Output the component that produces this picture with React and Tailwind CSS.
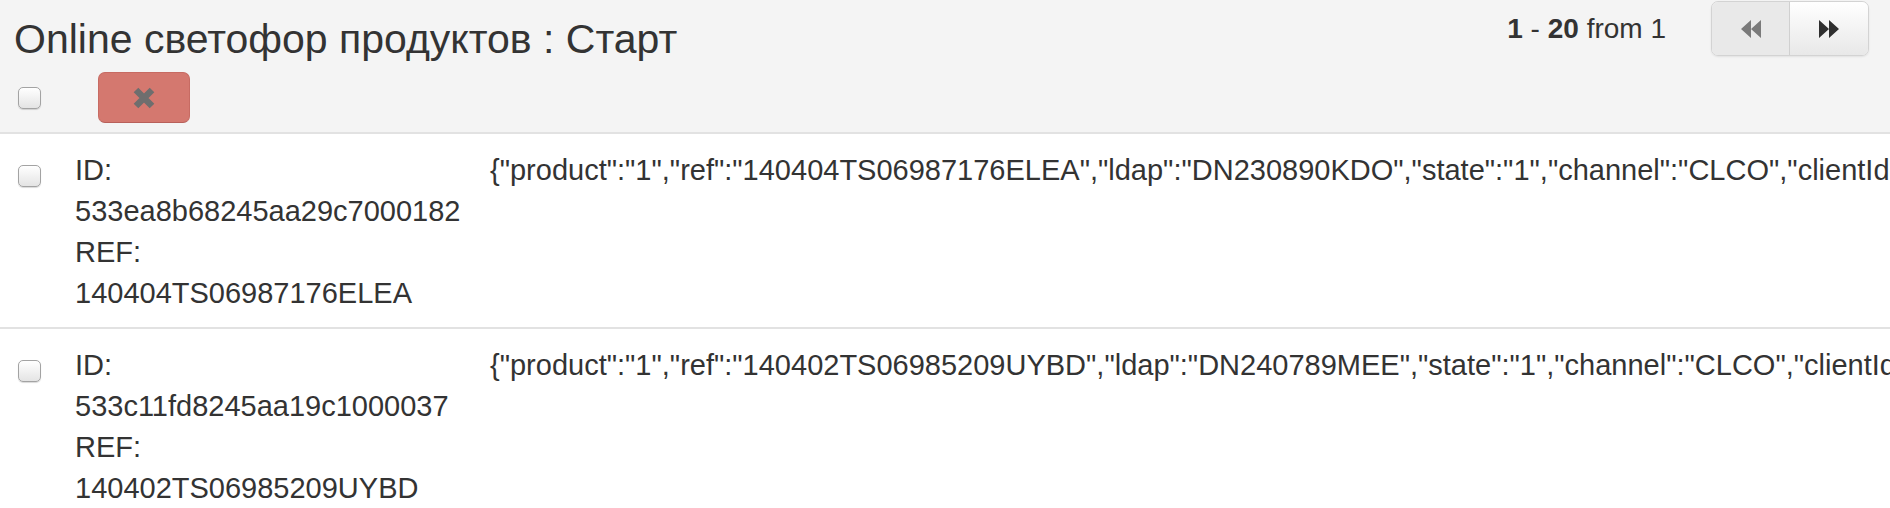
import React from "react";

const rows = [
  {
    id: "533ea8b68245aa29c7000182",
    ref: "140404TS06987176ELEA",
    json: '{"product":"1","ref":"140404TS06987176ELEA","ldap":"DN230890KDO","state":"1","channel":"CLCO","clientId":"","created":"2014-04-04"}',
  },
  {
    id: "533c11fd8245aa19c1000037",
    ref: "140402TS06985209UYBD",
    json: '{"product":"1","ref":"140402TS06985209UYBD","ldap":"DN240789MEE","state":"1","channel":"CLCO","clientId":"","created":"2014-04-02"}',
  },
];

const Check = () => (
  <input
    type="checkbox"
    className="block appearance-none w-[23px] h-[22px] rounded-[5px] border border-[#a3a3a3] bg-gradient-to-b from-white to-[#e4e4e4] shadow-[0_1px_1px_rgba(0,0,0,0.15)] shrink-0"
  />
);

const Backward = ({ color }) => (
  <svg width="26" height="20" viewBox="0 0 26 20">
    <path d="M13 1 L3 10 L13 19 Z M23 1 L13 10 L23 19 Z" fill={color} />
  </svg>
);

const Forward = ({ color }) => (
  <svg width="26" height="20" viewBox="0 0 26 20">
    <path d="M3 1 L13 10 L3 19 Z M13 1 L23 10 L13 19 Z" fill={color} />
  </svg>
);

const App = () => {
  return (
    <div
      className="w-[1890px] h-[508px] overflow-hidden bg-white text-[#333]"
      style={{ fontFamily: '"Liberation Sans", Arial, sans-serif' }}
    >
      <div className="bg-[#f4f4f4] border-b-2 border-[#e2e2e2] h-[134px] flex justify-between">
        <div className="pl-[14px] pt-[16px]">
          <h3 className="text-[41px] leading-[46px] text-[#333] font-normal whitespace-nowrap">
            Online светофор продуктов : Старт
          </h3>
          <div className="flex items-center mt-[10px]">
            <div className="pl-[4px] flex">
              <Check />
            </div>
            <button className="ml-[57px] w-[92px] h-[51px] rounded-[7px] bg-[#d4786f] border border-[#c76b63] border-b-[#b8605a] flex items-center justify-center">
              <svg width="24" height="24" viewBox="0 0 24 24">
                <path d="M4 4 L20 20 M20 4 L4 20" stroke="#6e6e6e" strokeWidth="6.5" strokeLinecap="butt" />
              </svg>
            </button>
          </div>
        </div>
        <div className="flex items-start pr-[21px] pt-[1px]">
          <div className="text-[28px] leading-[56px] whitespace-nowrap mr-[45px]">
            <b>1</b> - <b>20</b> from 1
          </div>
          <div className="flex h-[55px] rounded-[7px] border border-[#d3d3d3] shadow-[0_1px_2px_rgba(0,0,0,0.08)] overflow-hidden">
            <div className="w-[78px] bg-[#e9e9e9] flex items-center justify-center border-r border-[#d0d0d0]">
              <Backward color="#7a7a7a" />
            </div>
            <div className="w-[78px] bg-gradient-to-b from-white to-[#e8e8e8] flex items-center justify-center">
              <Forward color="#2f2f2f" />
            </div>
          </div>
        </div>
      </div>

      {rows.map((row) => (
        <div
          key={row.id}
          className="flex border-b-2 border-[#e2e2e2] pt-[16px] pb-[13px] text-[29px] leading-[41px]"
        >
          <div className="w-[75px] shrink-0 pl-[18px] pt-[15px] flex items-start">
            <Check />
          </div>
          <div className="w-[415px] shrink-0">
            <div>ID:</div>
            <div>{row.id}</div>
            <div>REF:</div>
            <div>{row.ref}</div>
          </div>
          <div className="whitespace-nowrap">{row.json}</div>
        </div>
      ))}
    </div>
  );
};

export default App;
